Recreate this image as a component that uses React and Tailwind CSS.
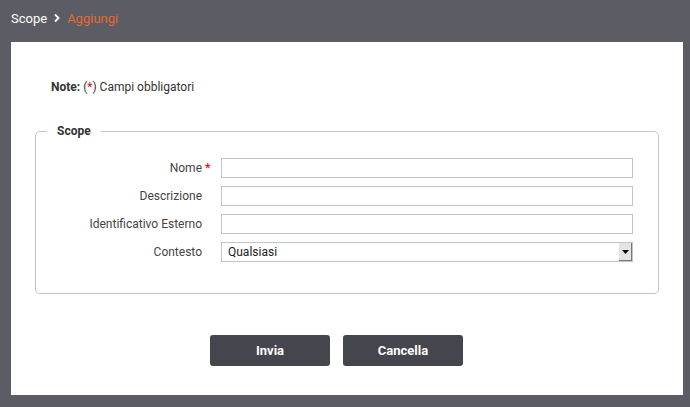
export default function App() {
  const rows = [
    { label: "Nome", req: true },
    { label: "Descrizione" },
    { label: "Identificativo Esterno" },
  ];
  return (
    <div className="w-[690px] h-[407px] bg-[#5c5c64] overflow-hidden" style={{ fontFamily: "Roboto, 'Liberation Sans', sans-serif" }}>
      <div className="h-[42px] flex items-start pt-[9px] pl-[11px] text-[13px]">
        <span className="text-white">Scope</span>
        <svg width="8" height="10" viewBox="0 0 8 10" className="ml-[6px] mr-[6px] mt-[4px]">
          <path d="M2 1.5 L5.5 5 L2 8.5" stroke="#ffffff" strokeWidth="1.8" fill="none" />
        </svg>
        <span className="text-[#e5692f]">Aggiungi</span>
      </div>
      <div className="ml-[11px] w-[672px] h-[353px] bg-white pt-[38px]">
        <div className="pl-[40px] text-[12px] text-[#333] leading-[14px]">
          <span className="font-bold">Note:</span> (<span className="text-[#e00]">*</span>) Campi obbligatori
        </div>
        <fieldset className="mt-[30px] ml-[24px] w-[624px] h-[170px] border border-[#c4c4c4] rounded-[5px] pl-[0px] pt-0">
          <legend className="ml-[11px] px-[10px] text-[12px] font-bold text-[#333] leading-[14px]">Scope</legend>
          <div className="flex flex-col gap-[8px] mt-[20px]">
            {rows.map((r) => (
              <div key={r.label} className="flex items-center h-[20px]">
                <div className="w-[166px] text-right text-[12px] text-[#444] relative">
                  {r.label}
                  {r.req && <span className="absolute left-[100%] ml-[3px] text-[#e00] text-[13px] top-[-1px]">*</span>}
                </div>
                <input className="ml-[19px] w-[412px] h-[20px] border border-[#c4c4c4] outline-none" />
              </div>
            ))}
            <div className="flex items-center h-[20px]">
              <div className="w-[166px] text-right text-[12px] text-[#444]">Contesto</div>
              <div className="ml-[19px] w-[412px] h-[20px] border border-[#c4c4c4] flex items-center">
                <span className="pl-[6px] text-[12px] text-[#222] flex-1">Qualsiasi</span>
                <div className="w-[13px] h-[18px] bg-[#e4e4e4] border-r border-b border-[#777] flex items-center justify-center">
                  <svg width="7" height="4" viewBox="0 0 7 4"><path d="M0 0 L7 0 L3.5 4 Z" fill="#000" /></svg>
                </div>
              </div>
            </div>
          </div>
        </fieldset>
        <div className="flex gap-[13px] ml-[199px] mt-[41px]">
          <button className="w-[120px] h-[31px] rounded-[3px] bg-[#45454d] text-white text-[13px] font-bold">Invia</button>
          <button className="w-[120px] h-[31px] rounded-[3px] bg-[#45454d] text-white text-[13px] font-bold">Cancella</button>
        </div>
      </div>
    </div>
  );
}
